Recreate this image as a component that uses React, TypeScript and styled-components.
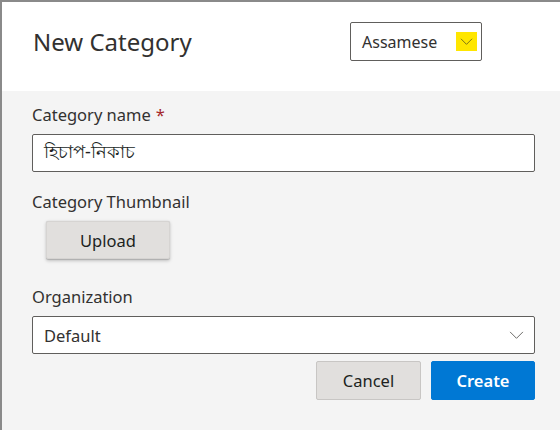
import React from "react";
import styled, { createGlobalStyle } from "styled-components";

const Global = createGlobalStyle`
  html, body { margin: 0; padding: 0; background: #f4f4f4; }
  body { font-family: "Noto Sans", "Open Sans", sans-serif; color: #323130; }
  * { box-sizing: border-box; }
`;

const Frame = styled.div`
  width: 560px;
  height: 430px;
  border-top: 2px solid #8a8a8a;
  border-left: 2px solid #8a8a8a;
  display: flex;
  flex-direction: column;
  background: #f4f4f4;
  overflow: hidden;
`;

const Header = styled.header`
  height: 89px;
  background: #ffffff;
  display: flex;
  justify-content: space-between;
  align-items: flex-start;
  padding: 20px 78px 0 31px;
`;

const Title = styled.h1`
  margin: 0;
  font-size: 24px;
  font-weight: 400;
  line-height: 40px;
  color: #323130;
`;

const LangSelect = styled.div`
  width: 132px;
  height: 39px;
  border: 1px solid #605e5c;
  border-radius: 2px;
  display: flex;
  align-items: center;
  justify-content: space-between;
  padding: 0 4px 0 11px;
  font-size: 16px;
  color: #323130;
  background: #fff;
`;

const YellowChevron = styled.span`
  width: 21px;
  height: 19px;
  background: #ffe600;
  display: flex;
  align-items: center;
  justify-content: center;
`;

const Body = styled.main`
  flex: 1;
  padding: 11px 25px 0 30px;
  display: flex;
  flex-direction: column;
`;

const Label = styled.label`
  display: block;
  font-size: 16.5px;
  font-weight: 400;
  line-height: 26px;
  color: #323130;
  margin-bottom: 6px;
`;

const Required = styled.span`
  color: #a4262c;
  margin-left: 5px;
`;

const Field = styled.div<{ $gap: number }>`
  margin-bottom: ${(p) => p.$gap}px;
`;

const Input = styled.div`
  height: 38px;
  background: #fff;
  border: 1px solid #605e5c;
  border-radius: 2px;
  display: flex;
  align-items: center;
  padding: 0 11px;
  font-size: 18px;
  color: #201f1e;
`;

const Dropdown = styled(Input)`
  justify-content: space-between;
  font-size: 16.5px;
  color: #323130;
  padding-right: 10px;
`;

const UploadButton = styled.button`
  margin-left: 14px;
  width: 124px;
  height: 38px;
  background: #e1dfdd;
  border: 1px solid #d6d4d2;
  border-radius: 2px;
  box-shadow: 0 1.6px 3.6px rgba(0, 0, 0, 0.2), 0 0.3px 0.9px rgba(0, 0, 0, 0.15);
  font-family: inherit;
  font-size: 16.5px;
  font-weight: 400;
  color: #201f1e;
`;

const Actions = styled.div`
  display: flex;
  justify-content: flex-end;
  gap: 10px;
  margin-top: 7px;
`;

const ActionButton = styled.button<{ $primary?: boolean }>`
  height: 39px;
  width: ${(p) => (p.$primary ? 104 : 105)}px;
  border-radius: 2px;
  border: 1px solid ${(p) => (p.$primary ? "#0078d4" : "#c8c6c4")};
  background: ${(p) => (p.$primary ? "#0078d4" : "#e1dfdd")};
  color: ${(p) => (p.$primary ? "#ffffff" : "#201f1e")};
  font-family: inherit;
  font-size: 16.5px;
  font-weight: ${(p) => (p.$primary ? 600 : 400)};
`;

const Chevron = ({ color, size }: { color: string; size: number }) => (
  <svg width={size} height={size * 0.55} viewBox="0 0 16 9" fill="none">
    <path d="M1 1l7 7 7-7" stroke={color} strokeWidth="1" />
  </svg>
);

export default function App() {
  return (
    <>
      <Global />
      <Frame>
        <Header>
          <Title>New Category</Title>
          <LangSelect>
            Assamese
            <YellowChevron>
              <Chevron color="#5c5a1a" size={13} />
            </YellowChevron>
          </LangSelect>
        </Header>
        <Body>
          <Field $gap={17}>
            <Label>
              Category name<Required>*</Required>
            </Label>
            <Input>হিচাপ-নিকাচ</Input>
          </Field>
          <Field $gap={25}>
            <Label>Category Thumbnail</Label>
            <UploadButton>Upload</UploadButton>
          </Field>
          <Field $gap={0}>
            <Label>Organization</Label>
            <Dropdown>
              Default
              <Chevron color="#605e5c" size={15} />
            </Dropdown>
          </Field>
          <Actions>
            <ActionButton>Cancel</ActionButton>
            <ActionButton $primary>Create</ActionButton>
          </Actions>
        </Body>
      </Frame>
    </>
  );
}
